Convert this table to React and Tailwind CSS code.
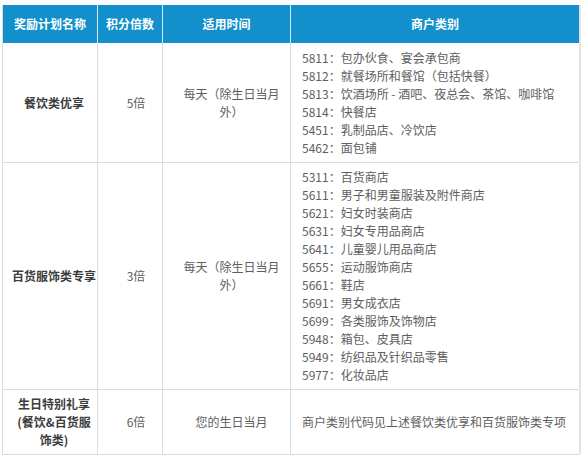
const rows = [
  {
    name: ["餐饮类优享"],
    rate: "5倍",
    time: "每天（除生日当月外）",
    codes: [
      "5811：包办伙食、宴会承包商",
      "5812：就餐场所和餐馆（包括快餐）",
      "5813：饮酒场所 - 酒吧、夜总会、茶馆、咖啡馆",
      "5814：快餐店",
      "5451：乳制品店、冷饮店",
      "5462：面包铺",
    ],
    h: "h-[120px]",
  },
  {
    name: ["百货服饰类专享"],
    rate: "3倍",
    time: "每天（除生日当月外）",
    codes: [
      "5311：百货商店",
      "5611：男子和男童服装及附件商店",
      "5621：妇女时装商店",
      "5631：妇女专用品商店",
      "5641：儿童婴儿用品商店",
      "5655：运动服饰商店",
      "5661：鞋店",
      "5691：男女成衣店",
      "5699：各类服饰及饰物店",
      "5948：箱包、皮具店",
      "5949：纺织品及针织品零售",
      "5977：化妆品店",
    ],
    h: "h-[227px]",
  },
  {
    name: ["生日特别礼享", "(餐饮&百货服", "饰类)"],
    rate: "6倍",
    time: "您的生日当月",
    codes: ["商户类别代码见上述餐饮类优享和百货服饰类专项"],
    h: "h-[65px]",
  },
];

const App = () => {
  return (
    <div
      className="w-[584px] h-[466px] bg-white pt-[5px] pl-[2px] text-[12px]"
      style={{ fontFamily: '"Noto Sans CJK SC", "Noto Sans", sans-serif' }}
    >
      <div className="w-[578px] border-l border-[#dcdcdc]">
        <div className="grid grid-cols-[95px_65px_128px_290px] h-[38px] bg-[#1190cb] text-white font-bold">
          <div className="flex items-center justify-center border-r border-[#d7ecf6]">奖励计划名称</div>
          <div className="flex items-center justify-center border-r border-[#d7ecf6]">积分倍数</div>
          <div className="flex items-center justify-center border-r border-[#d7ecf6]">适用时间</div>
          <div className="flex items-center justify-center border-r-2 border-[#e3e3e3]">商户类别</div>
        </div>

        {rows.map((item, k) => (
          <div
            key={k}
            className={"grid grid-cols-[95px_65px_128px_290px] border-b border-[#dcdcdc] text-[#5e5e5e] leading-[18px] " + item.h}
          >
            <div className="flex flex-col items-center justify-center border-r border-[#dcdcdc] pl-[8px] text-center font-bold text-[#3c3c3c] whitespace-nowrap">
              {item.name.map((n, i) => (
                <span key={i}>{n}</span>
              ))}
            </div>
            <div className="flex items-center justify-center border-r border-[#dcdcdc] pl-[12px]">
              {item.rate}
            </div>
            <div className="flex items-center justify-center border-r border-[#dcdcdc] pl-[20px] pr-[10px] text-center">
              {item.time}
            </div>
            <div className="flex flex-col justify-center border-r-2 border-[#e3e3e3] pl-[11px]">
              {item.codes.map((c, i) => (
                <p key={i} className="whitespace-nowrap">{c}</p>
              ))}
            </div>
          </div>
        ))}
      </div>
    </div>
  );
};

export default App;
